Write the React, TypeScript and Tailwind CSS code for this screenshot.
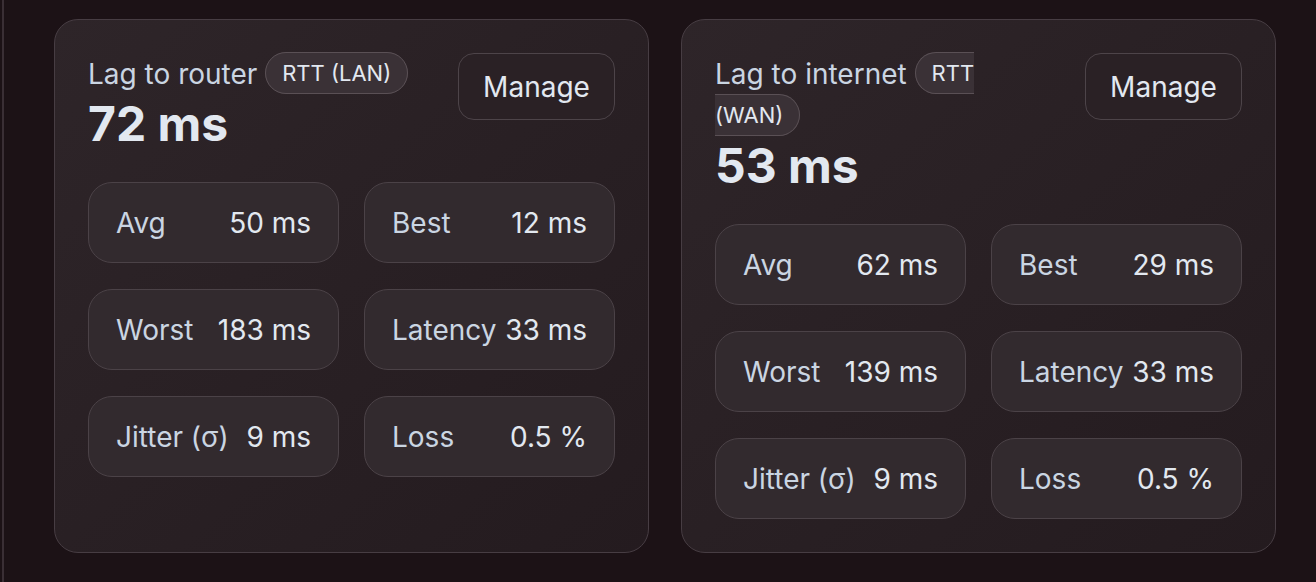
import React from "react";

type Stat = { label: string; value: string };

type Panel = {
  title: string;
  badge: string;
  value: string;
  stats: Stat[];
};

const panels: Panel[] = [
  {
    title: "Lag to router",
    badge: "RTT (LAN)",
    value: "72 ms",
    stats: [
      { label: "Avg", value: "50 ms" },
      { label: "Best", value: "12 ms" },
      { label: "Worst", value: "183 ms" },
      { label: "Latency", value: "33 ms" },
      { label: "Jitter (σ)", value: "9 ms" },
      { label: "Loss", value: "0.5 %" },
    ],
  },
  {
    title: "Lag to internet",
    badge: "RTT (WAN)",
    value: "53 ms",
    stats: [
      { label: "Avg", value: "62 ms" },
      { label: "Best", value: "29 ms" },
      { label: "Worst", value: "139 ms" },
      { label: "Latency", value: "33 ms" },
      { label: "Jitter (σ)", value: "9 ms" },
      { label: "Loss", value: "0.5 %" },
    ],
  },
];

function StatTile({ label, value }: Stat) {
  return (
    <div className="h-[81px] flex items-center justify-between gap-2 whitespace-nowrap rounded-3xl border border-[#4b4247] bg-[#322a2e] px-[27px] text-[28px]">
      <span className="text-slate-300">{label}</span>
      <span className="text-slate-200">{value}</span>
    </div>
  );
}

function LagCard({ panel }: { panel: Panel }) {
  return (
    <div className="flex-1 rounded-3xl border border-[#473d43] bg-linear-to-br from-[#2e2529] to-[#241b1f] p-[33px]">
      <div className="flex items-start justify-between gap-10">
        <div className="min-w-0 flex-1">
          <div className="text-[28px] leading-[42px] text-slate-300">
            {panel.title}{" "}
            <span className="rounded-full border border-[#5a5055] bg-[#3a3136] px-4 py-[7px] align-[3px] text-[22px] leading-none text-slate-200">
              {panel.badge}
            </span>
          </div>
          <div className="text-[48px] font-bold leading-[58px] text-slate-200">{panel.value}</div>
        </div>
        <button className="h-[67px] w-[157px] shrink-0 rounded-2xl border border-[#4d4449] bg-[#2a2125] text-[28px] text-slate-200">
          Manage
        </button>
      </div>
      <div className="mt-[29px] grid grid-cols-2 gap-x-[25px] gap-y-[26px]">
        {panel.stats.map((s) => (
          <StatTile key={s.label} label={s.label} value={s.value} />
        ))}
      </div>
    </div>
  );
}

export default function App() {
  return (
    <div className="flex h-[582px] w-[1316px] overflow-hidden bg-[#1c1216]" style={{ fontFamily: "Inter, 'Noto Sans', sans-serif" }}>
      <div className="ml-[2px] w-[2px] bg-[#3a2f35]" />
      <div className="flex flex-1 items-start gap-8 pl-[50px] pr-[40px] pt-[19px]">
        <div className="flex flex-1 items-stretch gap-8">
          {panels.map((p) => (
            <LagCard key={p.title} panel={p} />
          ))}
        </div>
      </div>
    </div>
  );
}
